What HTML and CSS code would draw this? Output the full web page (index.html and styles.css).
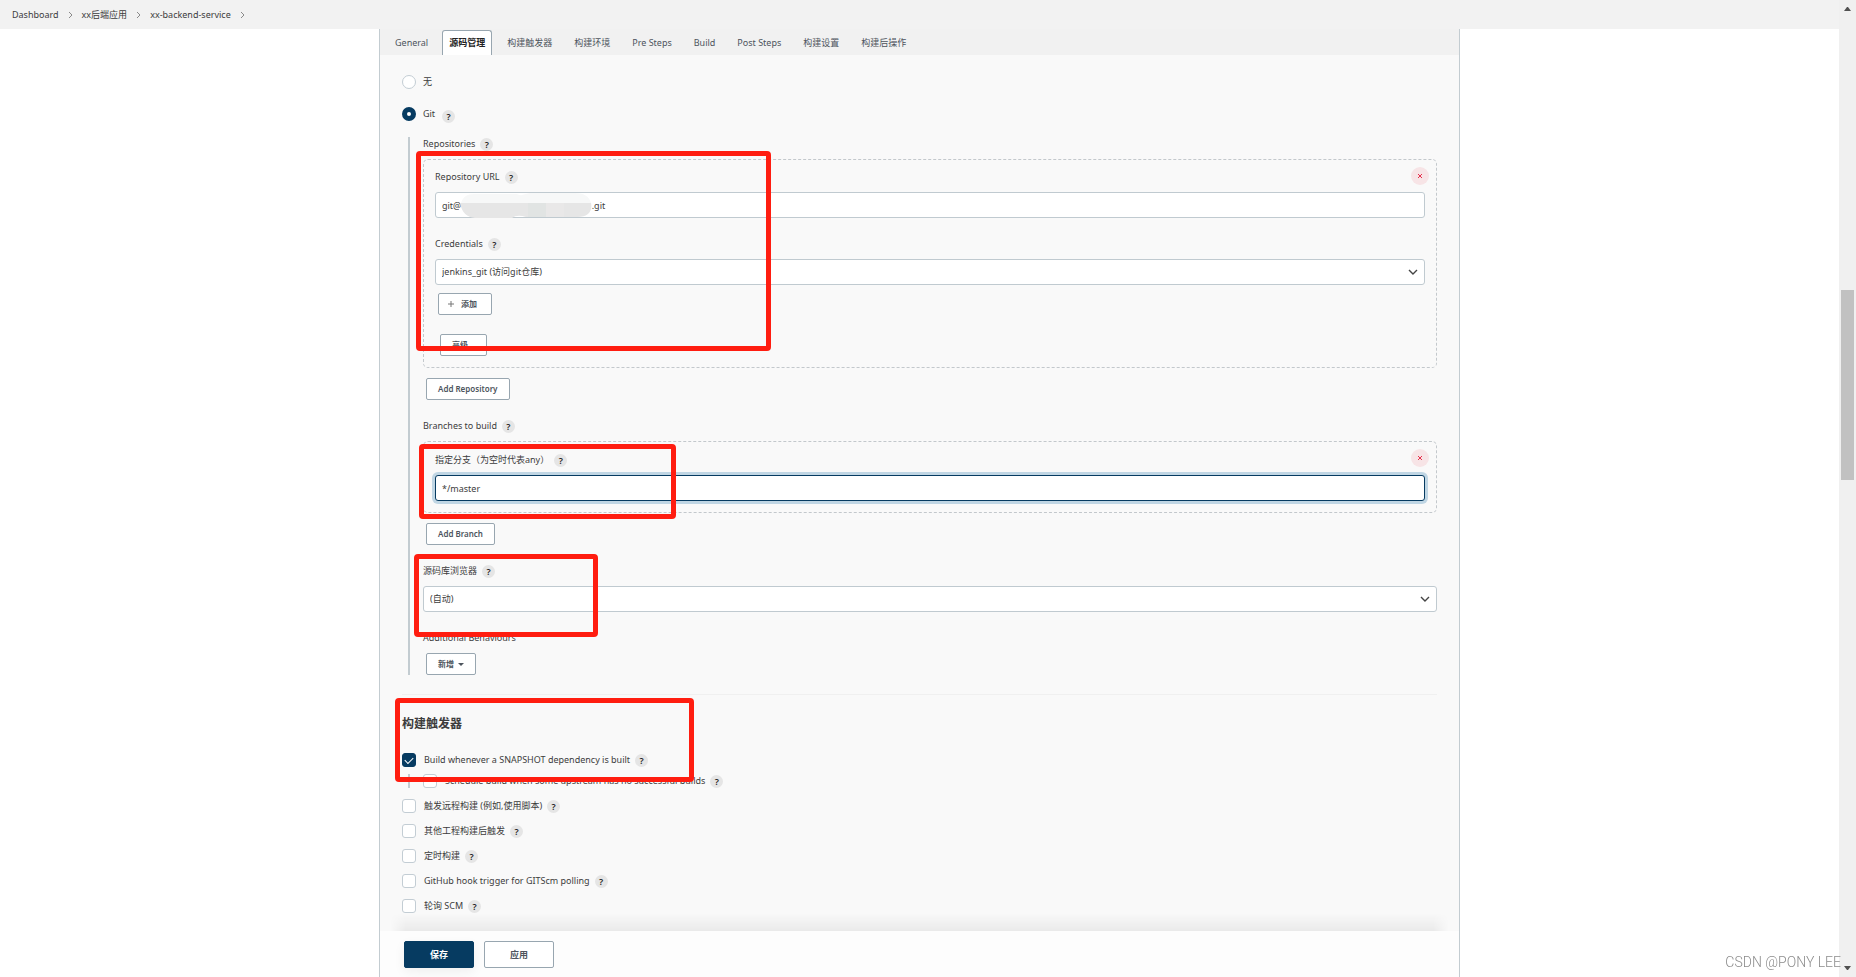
FILE: index.html
```html
<!DOCTYPE html>
<html lang="zh-CN">
<head>
<meta charset="utf-8">
<title>xx-backend-service Config [Jenkins]</title>
<link rel="stylesheet" href="styles.css">
</head>
<body>
<div class="page">
  <nav class="crumbs" aria-label="breadcrumb">
    <a href="#">Dashboard</a><svg class="sep" viewBox="0 0 5 8"><path d="M1 1l3 3-3 3"/></svg>
    <a href="#">xx后端应用</a><svg class="sep" viewBox="0 0 5 8"><path d="M1 1l3 3-3 3"/></svg>
    <a href="#">xx-backend-service</a><svg class="sep" viewBox="0 0 5 8"><path d="M1 1l3 3-3 3"/></svg>
  </nav>
  <main class="panel">
    <div class="tabs">
      <a class="tab" href="#">General</a>
      <a class="tab active" href="#">源码管理</a>
      <a class="tab" href="#">构建触发器</a>
      <a class="tab" href="#">构建环境</a>
      <a class="tab" href="#">Pre Steps</a>
      <a class="tab" href="#">Build</a>
      <a class="tab" href="#">Post Steps</a>
      <a class="tab" href="#">构建设置</a>
      <a class="tab" href="#">构建后操作</a>
    </div>
    <form class="form">
      <div class="radio-row"><input class="radio" type="radio" name="scm" id="scm-none"><label for="scm-none">无</label></div>
      <div class="radio-row"><input class="radio" type="radio" name="scm" id="scm-git" checked><label for="scm-git">Git</label><button type="button" class="help">?</button></div>

      <section class="nested">
        <div class="group">
          <div class="label-row"><span>Repositories</span><button type="button" class="help">?</button></div>
          <div class="chunk">
            <button type="button" class="remove" aria-label="remove"><svg viewBox="0 0 6 6"><path d="M1 1l4 4M5 1l-4 4"/></svg></button>
            <div class="group">
              <div class="label-row"><label for="url">Repository URL</label><button type="button" class="help">?</button></div>
              <div class="field">
                <input class="control" id="url" type="text" value="git@&emsp;&emsp;&emsp;&emsp;&emsp;&emsp;&emsp;&emsp;&emsp;&emsp;&emsp;&emsp;&emsp;&emsp;&ensp;.git">
                <svg class="mosaic" viewBox="0 0 132 25">
                  <path fill="#f7f8f8" d="M1 10C3 4 7 1 14 1h42c3 0 4 2 6 1l8-2h44c10 0 15 3 17 10z"/>
                  <path fill="#e6e6e6" d="M0 10h131c2 9-4 14-13 14H66q-9-3-14 1H15C7 24 2 20 0 10z"/>
                  <path fill="#e1e4e3" d="M68 10h18v14H68z"/><path fill="#e9e8e8" d="M86 10h18v14H86z"/>
                </svg>
              </div>
            </div>
            <div class="group">
              <div class="label-row"><label for="cred">Credentials</label><button type="button" class="help">?</button></div>
              <div class="field">
                <select class="control" id="cred"><option>jenkins_git (访问git仓库)</option></select>
                <svg class="chevron" viewBox="0 0 10 7"><path d="M1 1l4 4 4-4"/></svg>
              </div>
              <button type="button" class="btn add-cred"><svg class="plus" viewBox="0 0 6 6"><path d="M3 0v6M0 3h6"/></svg>添加</button>
            </div>
            <button type="button" class="btn advanced">高级...</button>
          </div>
          <button type="button" class="btn after-chunk">Add Repository</button>
        </div>

        <div class="group">
          <div class="label-row"><span>Branches to build</span><button type="button" class="help">?</button></div>
          <div class="chunk chunk-single">
            <button type="button" class="remove" aria-label="remove"><svg viewBox="0 0 6 6"><path d="M1 1l4 4M5 1l-4 4"/></svg></button>
            <div class="group">
              <div class="label-row"><label for="branch">指定分支（为空时代表any）</label><button type="button" class="help">?</button></div>
              <div class="field"><input class="control focused" id="branch" type="text" value="*/master"></div>
            </div>
          </div>
          <button type="button" class="btn after-chunk">Add Branch</button>
        </div>

        <div class="group">
          <div class="label-row"><label for="browser">源码库浏览器</label><button type="button" class="help">?</button></div>
          <div class="field">
            <select class="control" id="browser"><option>(自动)</option></select>
            <svg class="chevron" viewBox="0 0 10 7"><path d="M1 1l4 4 4-4"/></svg>
          </div>
        </div>

        <div class="group">
          <div class="label-row"><span>Additional Behaviours</span></div>
          <button type="button" class="btn">新增<svg class="caret" viewBox="0 0 6 3"><path d="M0 0h6L3 3z"/></svg></button>
        </div>
      </section>

      <hr class="rule">
      <h2 class="title">构建触发器</h2>
      <div class="triggers">
        <div class="snapshot">
          <div class="check-row"><input class="check" type="checkbox" id="t1" checked><label for="t1">Build whenever a SNAPSHOT dependency is built</label><button type="button" class="help">?</button></div>
          <div class="check-row sub"><input class="check" type="checkbox" id="t2"><label for="t2">Schedule build when some upstream has no successful builds</label><button type="button" class="help">?</button></div>
        </div>
        <div class="check-row"><input class="check" type="checkbox" id="t3"><label for="t3">触发远程构建 (例如,使用脚本)</label><button type="button" class="help">?</button></div>
        <div class="check-row"><input class="check" type="checkbox" id="t4"><label for="t4">其他工程构建后触发</label><button type="button" class="help">?</button></div>
        <div class="check-row"><input class="check" type="checkbox" id="t5"><label for="t5">定时构建</label><button type="button" class="help">?</button></div>
        <div class="check-row"><input class="check" type="checkbox" id="t6"><label for="t6">GitHub hook trigger for GITScm polling</label><button type="button" class="help">?</button></div>
        <div class="check-row"><input class="check" type="checkbox" id="t7"><label for="t7">轮询 SCM</label><button type="button" class="help">?</button></div>
      </div>
    </form>
    <footer class="actions">
      <button type="button" class="action primary">保存</button>
      <button type="button" class="action">应用</button>
    </footer>
    <div class="mark mark-repo"></div>
    <div class="mark mark-branch"></div>
    <div class="mark mark-browser"></div>
    <div class="mark mark-trigger"></div>
  </main>
</div>
<div class="scrollbar">
  <svg class="arrow" viewBox="0 0 7 4"><path d="M0 4h7L4 0H3z"/></svg>
  <div class="track"><div class="thumb"></div></div>
  <svg class="arrow" viewBox="0 0 7 4"><path d="M0 0h7L4 4H3z"/></svg>
</div>
<div class="watermark">CSDN @PONY LEE</div>
</body>
</html>
```

FILE: styles.css
```css
* { box-sizing: border-box; }

body {
  margin: 0;
  min-height: 100vh;
  display: grid;
  grid-template-columns: 1fr 17px;
  background: #fff;
  color: #3c3c3c;
  font: 9px/14px "Noto Sans", "Noto Sans CJK SC", sans-serif;
}

button, input, select { font: inherit; color: inherit; margin: 0; }
a { color: inherit; text-decoration: none; }
svg { display: block; flex: none; }

.page { display: flex; flex-direction: column; min-width: 0; }

.crumbs {
  display: flex;
  align-items: center;
  gap: 9px;
  height: 29px;
  padding: 0 12px;
  background: #f2f2f2;
}
.sep { width: 5px; height: 8px; fill: none; stroke: #8a8a8a; }

.panel {
  position: relative;
  flex: 1;
  display: flex;
  flex-direction: column;
  width: 100%;
  max-width: 1081px;
  margin: 0 auto;
  background: #f9f9f9;
  border: solid #c3ccd1;
  border-width: 0 1px;
}

.tabs {
  display: flex;
  align-items: flex-end;
  height: 26px;
  padding-left: 4px;
  background: #f1f1f1;
}
.tab {
  height: 25px;
  padding: 0 10px;
  border: 1px solid transparent;
  border-bottom: 0;
  border-radius: 3px 3px 0 0;
  line-height: 24px;
  color: #4d545d;
}
.tab.active {
  margin: 0 4px 0 3px;
  padding: 0 6px;
  background: #fff;
  border-color: #98a6b0;
  color: #222;
  font-weight: 600;
}

.form { flex: 1; padding: 18px 22px; }

.radio-row {
  display: flex;
  align-items: flex-end;
  gap: 7px;
  margin-bottom: 14px;
  line-height: 18px;
}
.radio {
  appearance: none;
  align-self: center;
  width: 14px;
  height: 14px;
  border: 1px solid #c3cdd4;
  border-radius: 50%;
  background: #fff;
}
.radio:checked { border: 5px solid #063b61; }

.help {
  display: block;
  width: 13px;
  height: 13px;
  padding: 0;
  border: 0;
  border-radius: 50%;
  background: #e5e5e5;
  color: #222;
  font-weight: 600;
  line-height: 13px;
  text-align: center;
}

.nested {
  display: flex;
  flex-direction: column;
  gap: 19px;
  margin-left: 6px;
  padding-left: 13px;
  border-left: 2px solid #c3ccd1;
}
.nested > .group > .btn { margin-left: 3px; }
.label-row {
  display: flex;
  align-items: center;
  gap: 5px;
  height: 14px;
  margin-bottom: 8px;
}
.chunk {
  position: relative;
  display: flex;
  flex-direction: column;
  align-items: stretch;
  gap: 19px;
  padding: 10px 11px 11px;
  border: 1px dashed #c3c8cc;
  border-radius: 5px;
}
.chunk-single { padding-top: 11px; }
.remove {
  position: absolute;
  top: 7px;
  right: 7px;
  display: grid;
  place-items: center;
  width: 18px;
  height: 18px;
  padding: 0;
  border: 0;
  border-radius: 50%;
  background: #f7e4e6;
}
.remove svg { width: 6px; height: 6px; stroke: #e6304c; fill: none; }

.field { position: relative; }
.control {
  appearance: none;
  display: block;
  width: 100%;
  height: 26px;
  padding: 0 6px;
  border: 1px solid #c0cad0;
  border-radius: 3px;
  background: #fff;
}
.control.focused { border-color: #063b61; box-shadow: 0 0 0 3px #c0d6e4; }
.chevron {
  position: absolute;
  right: 7px;
  top: 10px;
  width: 10px;
  height: 7px;
  fill: none;
  stroke: #444;
  stroke-width: 1.4;
  pointer-events: none;
}
.mosaic { position: absolute; left: 25px; top: 1px; width: 132px; height: 25px; }

.btn {
  display: flex;
  align-items: center;
  justify-content: center;
  width: max-content;
  height: 22px;
  padding: 0 11px;
  border: 1px solid #98a6b0;
  border-radius: 2px;
  background: #fff;
  color: #4d545d;
  font-size: 8px;
  font-weight: 600;
}
.after-chunk { margin-top: 10px; }
.add-cred { margin: 8px 0 0 3px; padding: 0 14px 0 9px; gap: 7px; }
.advanced { margin-left: 5px; }
.plus { width: 6px; height: 6px; stroke: #777; }
.caret { width: 6px; height: 3px; margin-left: 4px; fill: #4d545d; }

.rule { height: 1px; margin: 19px 0 20px; border: 0; background: #f0f0f0; }
.title { margin: 0 0 20px; font-size: 12px; line-height: 18px; font-weight: 600; }

.triggers { display: flex; flex-direction: column; gap: 11px; }
.check-row { display: flex; align-items: center; gap: 8px; height: 14px; }
.check-row .help { margin-left: -3px; }
.snapshot { display: flex; flex-direction: column; gap: 7px; }
.sub { margin-left: 6px; padding-left: 13px; border-left: 2px solid #c3ccd1; }
.check {
  appearance: none;
  display: grid;
  place-items: center;
  width: 14px;
  height: 14px;
  border: 1px solid #c3cdd4;
  border-radius: 3px;
  background: #fff;
}
.check:checked { border-color: #063b61; background: #063b61; }
.check:checked::before {
  content: "";
  width: 7px;
  height: 4px;
  border: solid #fff;
  border-width: 0 0 1px 1px;
  transform: translateY(-1px) rotate(-45deg);
}

.actions {
  position: sticky;
  bottom: 0;
  display: flex;
  gap: 10px;
  padding: 10px 24px 9px;
  background: #fdfdfd;
}
.actions::before {
  content: "";
  position: absolute;
  left: 10px;
  right: 10px;
  bottom: 100%;
  height: 18px;
  background: linear-gradient(transparent, rgba(0, 0, 0, .06));
  mask-image: linear-gradient(90deg, transparent, #000 16px, #000 calc(100% - 16px), transparent);
}
.action {
  width: 70px;
  height: 27px;
  padding: 0;
  border: 1px solid #98a6b0;
  border-radius: 2px;
  background: #fff;
  color: #4d545d;
  font-weight: 600;
}
.action.primary {
  border-color: #063b61;
  background: #063b61;
  color: #fff;
  font-weight: 700;
  box-shadow: 0 4px 12px rgba(0, 0, 0, .06);
}

/* Highlight frames drawn over the form */
.mark {
  position: absolute;
  border: 5px solid #ff1d10;
  border-radius: 4px;
  pointer-events: none;
}
.mark-repo { left: 36px; top: 122px; width: 355px; height: 200px; }
.mark-branch { left: 39px; top: 415px; width: 257px; height: 75px; }
.mark-browser { left: 34px; top: 525px; width: 184px; height: 83px; }
.mark-trigger { left: 15px; top: 669px; width: 299px; height: 84px; }

.scrollbar {
  display: flex;
  flex-direction: column;
  align-items: center;
  padding: 7px 0;
  background: #f0f0f0;
}
.arrow { width: 7px; height: 4px; fill: #505050; }
.track { flex: 1; width: 13px; padding-top: 279px; }
.thumb { height: 190px; background: #c1c1c1; }

.watermark {
  position: fixed;
  right: 15px;
  bottom: 6px;
  color: #8c8c8c;
  font: 300 14px/18px Roboto, sans-serif;
}
```
